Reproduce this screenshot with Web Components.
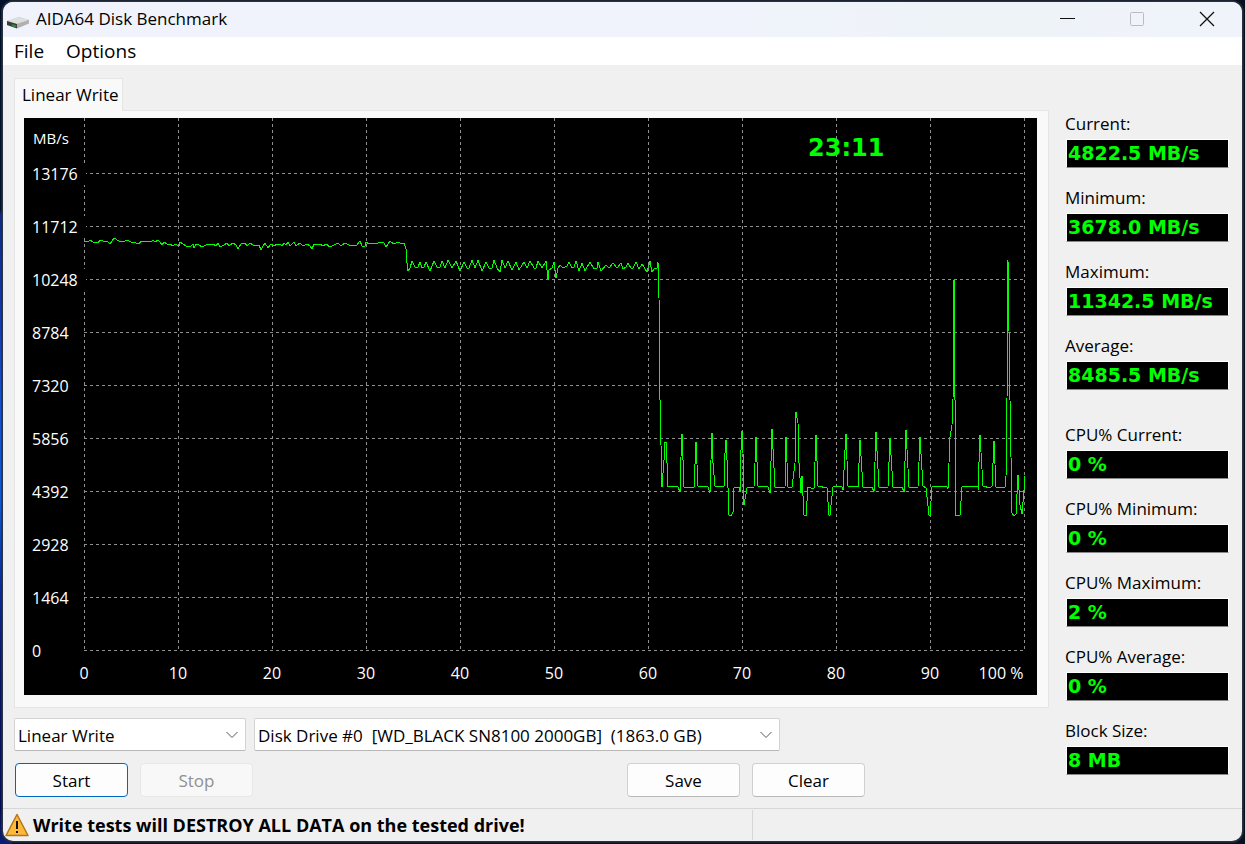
<!DOCTYPE html>
<html lang="en">
<head>
<meta charset="utf-8">
<title>AIDA64 Disk Benchmark</title>
<style>
    body {
        margin: 0;
        min-height: 100vh;
        box-sizing: border-box;
        padding: 2px 3px 3px;
        display: flex;
        background:
            linear-gradient(#04112a 0, #04112a 210px, #0b2a86 214px, #1238a8 310px, #1650d0 400px, #0f5ad6 500px, #0a2c9a 580px, #08176a 660px, #050c52 810px, #0a1e78 100%) left / 12px 100% no-repeat,
            #06101f;
        font-family: "Open Sans", "Noto Sans", sans-serif;
        font-size: 17px;
        line-height: 24px;
        color: #000;
    }
</style>
</head>
<body>
<bench-window>
    <title-bar slot="title">AIDA64 Disk Benchmark</title-bar>
    <menu-bar slot="menu">
        <a href="#file">File</a>
        <a href="#options">Options</a>
    </menu-bar>

    <tab-panel slot="chart">
        <span slot="tab">Linear Write</span>
        <speed-chart time="23:11"></speed-chart>
    </tab-panel>

    <bench-controls slot="controls"></bench-controls>

    <stat-list slot="stats">
        <stat-item label="Current:">4822.5 MB/s</stat-item>
        <stat-item label="Minimum:">3678.0 MB/s</stat-item>
        <stat-item label="Maximum:">11342.5 MB/s</stat-item>
        <stat-item label="Average:">8485.5 MB/s</stat-item>
        <stat-item label="CPU% Current:" first>0 %</stat-item>
        <stat-item label="CPU% Minimum:">0 %</stat-item>
        <stat-item label="CPU% Maximum:">2 %</stat-item>
        <stat-item label="CPU% Average:">0 %</stat-item>
        <stat-item label="Block Size:">8 MB</stat-item>
    </stat-list>

    <status-bar slot="status">Write tests will DESTROY ALL DATA on the tested drive!</status-bar>
</bench-window>

<script>
function template(html) {
    const t = document.createElement('template');
    t.innerHTML = html;
    return t;
}

class BaseElement extends HTMLElement {
    constructor(tpl) {
        super();
        this.attachShadow({ mode: 'open' });
        this.shadowRoot.appendChild(tpl.content.cloneNode(true));
    }
}

/* ---- window frame ---- */
const windowTpl = template(`
    <style>
        :host{flex:1;display:flex;flex-direction:column;min-width:0;background:#f0f0f0;border-radius:10px;overflow:hidden;box-shadow:0 0 0 1px #2b323f,0 0 0 2px rgba(43,50,63,.6)}
        main{flex:1;display:grid;grid-template-columns:minmax(0,1fr) 164px;column-gap:16px;padding:13px 13px 11px 11px}
        .left{display:flex;flex-direction:column;gap:10px}
        aside{padding-top:34px}
    </style>
    <slot name="title"></slot>
    <slot name="menu"></slot>
    <main>
        <div class="left">
            <slot name="chart"></slot>
            <slot name="controls"></slot>
        </div>
        <aside><slot name="stats"></slot></aside>
    </main>
    <slot name="status"></slot>
`);

class BenchWindow extends BaseElement {
    constructor() { super(windowTpl); }
}

/* ---- title bar ---- */
const titleTpl = template(`
    <style>
        :host{display:flex;align-items:center;box-sizing:border-box;height:35px;padding:0 0 2px 4px;background:linear-gradient(90deg,#f0f3fb 60%,#eef3f8 80%,#f0f3fb)}
        h1{flex:1;margin:0 0 0 7px;font-size:17px;font-weight:400}
        button{width:70px;height:33px;padding:0;border:0;background:none;display:flex;align-items:center;justify-content:center}
        svg{display:block}
        .disk{margin-top:8px}
    </style>
    <svg class="disk" width="22" height="14" viewBox="0 0 22 14" aria-hidden="true">
        <path d="M0 5L12 1L22 4V7L10 12L0 9Z" fill="#b9b9b9"/>
        <path d="M0 5L12 1L22 4L10 8Z" fill="#dedede"/>
        <path d="M0 5L10 8V12.500L0 9Z" fill="#3a3d3a"/>
        <path d="M10 8L22 4V7.500L10 12.500Z" fill="#b0b0b0"/>
        <path d="M5 9L9 10.500" stroke="#2f8a3c" stroke-width="2"/>
    </svg>
    <h1><slot></slot></h1>
    <button aria-label="Minimize"><svg width="16" height="16"><path d="M1 7.500H16" stroke="#111"/></svg></button>
    <button aria-label="Maximize" disabled><svg width="16" height="16"><rect x="1.500" y="1.500" width="13" height="13" rx="1" fill="none" stroke="#b9bcc2"/></svg></button>
    <button aria-label="Close"><svg width="16" height="16"><path d="M1 1L15 15M15 1L1 15" stroke="#111" stroke-width="1.300"/></svg></button>
`);

class TitleBar extends BaseElement {
    constructor() { super(titleTpl); }
}

/* ---- menu ---- */
const menuTpl = template(`
    <style>
        :host{display:flex;gap:22px;height:28px;padding-left:11px;background:#fff;font-size:19px;line-height:28px}
        ::slotted(a){color:#000;text-decoration:none}
    </style>
    <slot></slot>
`);

class MenuBar extends BaseElement {
    constructor() { super(menuTpl); }
}

/* ---- tab with its page ---- */
const tabTpl = template(`
    <style>
        :host{display:block}
        [role=tab]{display:block;position:relative;z-index:1;box-sizing:border-box;height:33px;margin:0 0 -1px;padding:0 3px 0 7px;border:1px solid #e5e5e5;border-bottom:0;background:#f9f9f9;font:inherit;color:inherit}
        [role=tabpanel]{padding:7px 11px 12px 9px;border:1px solid #e5e5e5;background:#f9f9f9}
    </style>
    <button role="tab" aria-selected="true"><slot name="tab"></slot></button>
    <div role="tabpanel"><slot></slot></div>
`);

class TabPanel extends BaseElement {
    constructor() { super(tabTpl); }
}

/* ---- chart ---- */
const TRACE = `
60,123 64,124 66,122 69,124 72,124 74,125 76,122 79,123 83,123 86,126 90,120 95,123 99,124 103,122 107,124 109,124
112,125 115,126 117,123 121,124 124,123 127,124 129,122 131,124 134,122 136,124 138,127 140,124 143,126 146,126
149,128 151,126 155,128 156,124 159,126 162,128 167,128 169,126 170,130 172,126 175,127 178,129 182,127 185,126
189,126 192,128 194,125 196,129 200,127 203,125 205,128 209,125 212,127 214,131 217,126 221,125 223,128 226,125
229,127 235,127 237,132 239,128 241,125 244,130 247,126 250,128 253,126 256,126 258,128 260,125 262,127 264,124
266,128 270,124 272,128 276,125 279,128 283,126 286,128 288,131 290,126 296,126 299,128 302,126 306,129 310,127
314,125 317,128 321,125 325,127 333,127 336,123 338,128 341,128 342,124 345,126 349,125 352,126 356,124 360,125
362,129 366,123 370,126 374,124 376,125 380,125 382,131 383,145 384,153 386,150 388,143 391,149 394,149 396,144
398,150 400,149 402,144 406,153 410,143 413,149 416,149 418,143 421,150 424,142 428,150 432,143 436,153 440,144
443,150 445,150 448,142 451,150 454,142 458,153 462,144 465,150 468,150 470,142 473,150 476,154 478,142 481,150
484,143 488,152 492,144 495,152 500,144 503,150 506,143 510,150 512,150 514,143 518,150 522,143 524,161 525,152
528,150 530,144 532,160 534,150 536,147 539,150 543,148 545,144 548,150 550,149 552,143 555,153 558,145 561,153
566,144 570,151 573,150 574,144 577,153 582,147 585,150 589,145 593,150 597,145 599,151 602,149 604,145 607,150
609,150 612,144 615,151 618,146 623,154 626,143 628,154 631,150 633,150 634,144 635,180 636,282 637,327 638,369
640,342 640,325 642,324 643,345 644,369 648,368 654,369 656,374 657,339 658,316 659,342 660,369 666,369 670,369
672,324 674,368 684,369 686,375 687,342 688,315 689,345 691,368 700,369 701,335 702,322 703,342 705,397 707,398
709,394 710,370 715,369 716,374 717,332 718,313 719,335 720,387 723,370 730,369 731,345 732,319 734,368 744,369
746,375 748,311 751,369 761,369 762,319 764,369 768,369 771,345 772,294 774,305 775,345 777,375 778,358 780,397
782,398 784,369 790,371 792,317 794,368 803,370 805,397 806,397 809,369 813,368 818,369 819,372 821,332 822,316
824,368 834,369 836,322 839,369 848,369 850,374 852,314 855,369 864,369 866,320 869,369 878,369 880,374 882,312
885,369 894,369 896,319 899,368 902,370 905,397 906,397 908,369 915,368 923,369 924,371 926,319 928,307 929,282
930,162 931,282 932,397 936,397 938,369 944,368 954,369 954,372 956,317 959,368 966,370 968,368 970,323 972,369
981,369 982,359 983,282 984,142 986,282 988,395 990,398 992,396 994,357 996,387 998,396 1000,372 1001,358`;

const chartTpl = template(`
    <style>
        :host{display:block}
        svg{display:block;width:100%;height:auto;background:#000}
        .grid line{stroke:#909090;stroke-dasharray:3 3}
        polyline{fill:none;stroke:#00ff00}
        text{fill:#fff;font-size:16px}
        .unit{font-size:15px}
        .x text{text-anchor:middle}
        .time{fill:#00ff00;font:bold 24px "DejaVu Sans",sans-serif}
    </style>
    <svg viewBox="0 0 1013 577" role="img" aria-label="Write speed in MB/s by disk position" shape-rendering="crispEdges">
        <g class="grid"></g>
        <g class="y"><text class="unit" x="9" y="26">MB/s</text></g>
        <polyline/>
        <g class="x"></g>
        <text class="time" x="784" y="38"></text>
    </svg>
`);

class SpeedChart extends BaseElement {
    constructor() { super(chartTpl); }

    add(parent, name, attrs, text) {
        const el = document.createElementNS('http://www.w3.org/2000/svg', name);
        for (const key in attrs) el.setAttribute(key, attrs[key]);
        if (text !== undefined) el.textContent = text;
        parent.appendChild(el);
    }

    connectedCallback() {
        const root = this.shadowRoot;
        const grid = root.querySelector('.grid');
        const xAxis = root.querySelector('.x');
        const yAxis = root.querySelector('.y');

        for (let i = 0; i <= 10; i++) {
            const x = 60 + i * 94;
            this.add(grid, 'line', { x1: x + 0.5, x2: x + 0.5, y1: 0, y2: 533 });
            if (i < 10) this.add(xAxis, 'text', { x: x, y: 561 }, i * 10);
        }
        this.add(xAxis, 'text', { x: 977, y: 561 }, '100 %');

        for (let i = 0; i <= 9; i++) {
            const y = 532 - i * 53;
            const value = String(i * 1464);
            this.add(grid, 'line', { x1: 60, x2: 1001, y1: y + 0.5, y2: y + 0.5 });
            // five-digit labels blank out the start of the grid
            if (value.length > 4) this.add(yAxis, 'rect', { x: 8, y: y - 10, width: 54, height: 22, fill: '#000' });
            this.add(yAxis, 'text', { x: 8, y: y + 7 }, value);
        }

        root.querySelector('polyline').setAttribute('points', TRACE.trim());
        root.querySelector('.time').textContent = this.getAttribute('time');
    }
}

/* ---- selects and buttons ---- */
const controlsTpl = template(`
    <style>
        :host{display:block}
        .row{display:flex}
        .selects{gap:8px}
        .buttons{gap:12px;margin-top:12px;padding-left:1px}
        .pick{position:relative;display:flex}
        .pick svg{position:absolute;right:8px;top:13px;pointer-events:none}
        .test{width:232px}
        .drive{width:526px}
        select{width:100%;height:33px;padding:2px 24px 0 3px;appearance:none;border:1px solid #d3d3d3;border-bottom-color:#b8b8b8;border-radius:2px;background:#fff;font:inherit;color:#000}
        button{width:113px;height:34px;padding:2px 0 0;border:1px solid #d0d0d0;border-bottom-color:#b8b8b8;border-radius:4px;background:#fdfdfd;font:inherit;color:#000}
        button.default{border-color:#0067c0}
        button:disabled{border-color:#e8e8e8;background:#f8f8f8;color:#909090}
        .save{margin-left:362px}
    </style>
    <div class="row selects">
        <div class="pick test">
            <select aria-label="Test"><option>Linear Write</option></select>
            <svg width="12" height="8"><path d="M.5 1L6 6.500L11.500 1" fill="none" stroke="#555"/></svg>
        </div>
        <div class="pick drive">
            <select aria-label="Drive"><option>Disk Drive #0&nbsp; [WD_BLACK SN8100 2000GB]&nbsp; (1863.0 GB)</option></select>
            <svg width="12" height="8"><path d="M.5 1L6 6.500L11.500 1" fill="none" stroke="#555"/></svg>
        </div>
    </div>
    <div class="row buttons">
        <button class="default">Start</button>
        <button disabled>Stop</button>
        <button class="save">Save</button>
        <button>Clear</button>
    </div>
`);

class BenchControls extends BaseElement {
    constructor() { super(controlsTpl); }
}

/* ---- readouts ---- */
const statListTpl = template(`
    <style>
        :host{display:flex;flex-direction:column;gap:18px}
        ::slotted([first]){margin-top:15px}
    </style>
    <slot></slot>
`);

class StatList extends BaseElement {
    constructor() { super(statListTpl); }
}

const statTpl = template(`
    <style>
        :host{display:block}
        label{display:block;height:27px}
        output{display:block;box-sizing:border-box;height:29px;margin-left:1px;padding-left:1px;border:1px solid #fff;border-bottom-color:#888;background:#000;color:#00ff00;font:bold 19px/26px "DejaVu Sans",sans-serif;white-space:nowrap}
    </style>
    <label for="value"></label>
    <output id="value"><slot></slot></output>
`);

class StatItem extends BaseElement {
    constructor() { super(statTpl); }

    connectedCallback() {
        this.shadowRoot.querySelector('label').textContent = this.getAttribute('label');
    }
}

/* ---- status bar ---- */
const statusTpl = template(`
    <style>
        :host{display:flex;align-items:stretch;height:33px;box-sizing:border-box;border-top:1px solid #d7d7d7;font-weight:700;font-size:18px}
        .message{display:flex;align-items:center;gap:4px;width:749px;padding-left:2px;box-sizing:border-box}
        .rest{flex:1;margin:1px 0;border-left:1px solid #d7d7d7}
    </style>
    <div class="message">
        <svg width="24" height="24" viewBox="0 0 24 24" aria-hidden="true">
            <path d="M12 1.500L23 22.500H1Z" fill="#fdb93a" stroke="#b5761b" stroke-width="1.500" stroke-linejoin="round"/>
            <path d="M12 8V16M12 18V20" stroke="#111" stroke-width="2"/>
        </svg>
        <span><slot></slot></span>
    </div>
    <div class="rest"></div>
`);

class StatusBar extends BaseElement {
    constructor() { super(statusTpl); }
}

customElements.define('bench-window', BenchWindow);
customElements.define('title-bar', TitleBar);
customElements.define('menu-bar', MenuBar);
customElements.define('tab-panel', TabPanel);
customElements.define('speed-chart', SpeedChart);
customElements.define('bench-controls', BenchControls);
customElements.define('stat-list', StatList);
customElements.define('stat-item', StatItem);
customElements.define('status-bar', StatusBar);
</script>
</body>
</html>
